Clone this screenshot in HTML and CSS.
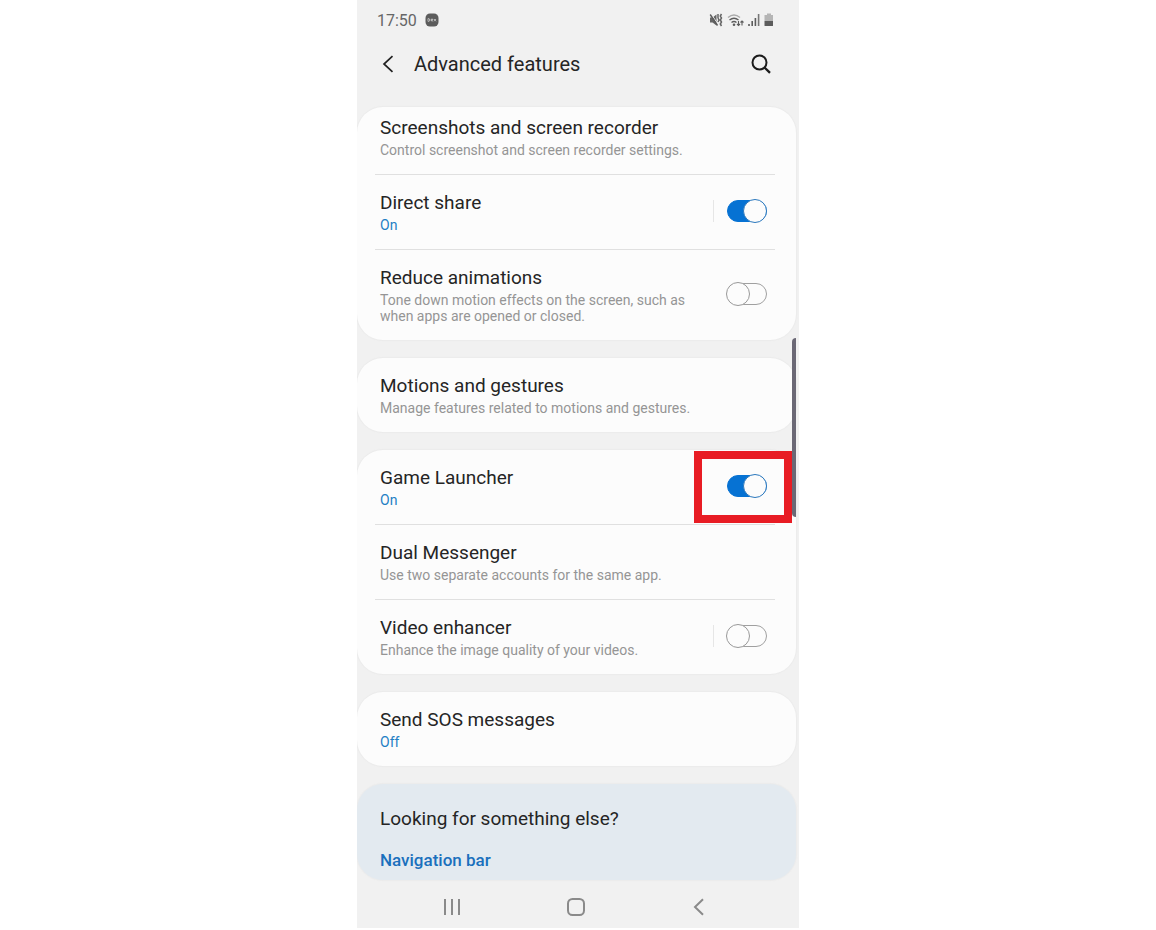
FILE: index.html
```html
<!DOCTYPE html>
<html lang="en">

<head>
  <meta charset="UTF-8">
  <meta name="viewport" content="width=device-width, initial-scale=1.0">
  <title>Advanced features</title>
  <link rel="stylesheet" href="styles.css">
</head>

<body>
  <div class="phone">
    <div class="status-bar">
      <span class="clock">17:50</span>
      <svg class="dex" width="14" height="14" viewBox="0 0 14 14">
        <rect x="0.5" y="0.5" width="13" height="13" rx="4.5" fill="#5c5c5c"/>
        <path d="M3 5.6v2.8h.8q1-.2 1-1.4t-1-1.4zM8 7H6q0-1 1-1t1 1M6 7q0 1.300 1.800 1M9 6l2 2.300M11 6L9 8.300" fill="none" stroke="#ddd" stroke-width="0.7"/>
      </svg>
      <div class="status-icons">
        <svg width="14" height="14" viewBox="0 0 14 14">
          <path d="M1 4.500h2.500L7.500 1.500v11L3.500 9.500H1z" fill="#666"/>
          <path d="M2.200 1l7 10.500" stroke="#f1f1f1" stroke-width="1"/>
          <path d="M1.200 1.500l7.300 11" stroke="#5c5c5c" stroke-width="1.400"/>
          <path d="M9 1v4M12.500 1l-1.200 2 1.200 2-1.200 2 1.200 2-1.200 2 1.200 2M9 5l1 2-1 2" fill="none" stroke="#666" stroke-width="1.500"/>
        </svg>
        <svg width="17" height="14" viewBox="0 0 17 14">
          <path d="M1 4.500q6-5 12 0" fill="none" stroke="#aaa" stroke-width="1.400"/>
          <path d="M2.500 7q4.500-3.600 9 0M4.500 9.500q2.500-2 5 0" fill="none" stroke="#5c5c5c" stroke-width="1.400"/>
          <circle cx="7" cy="11.800" r="1.300" fill="#5c5c5c"/>
          <path d="M11.500 8v4.500M10 11l1.500 1.500 1.500-1.500M15 12.500V8M13.500 9.500L15 8l1.500 1.500" fill="none" stroke="#5c5c5c" stroke-width="1.100"/>
        </svg>
        <svg width="12" height="14" viewBox="0 0 12 14">
          <path d="M1 13v-2M4.200 13V8M7.400 13V5" stroke="#5c5c5c" stroke-width="1.600"/>
          <path d="M10.600 13V1" stroke="#777" stroke-width="1.600"/>
        </svg>
        <svg width="10" height="14" viewBox="0 0 10 14">
          <path d="M3 0.500h4V2h2v6H0.500V2H3z" fill="#b5b5b5"/>
          <path d="M0.500 8H9v4.500q0 .5-.5.5H1q-.5 0-.5-.5z" fill="#5c5c5c"/>
        </svg>
      </div>
    </div>

    <header class="app-bar">
      <button class="icon-button" type="button" aria-label="Back">
        <svg width="12" height="18" viewBox="0 0 12 18">
          <path d="M10.500 1.200L2 9l8.500 7.800" fill="none" stroke="#222" stroke-width="1.700"/>
        </svg>
      </button>
      <h1>Advanced features</h1>
      <button class="icon-button search" type="button" aria-label="Search">
        <svg width="20" height="20" viewBox="0 0 20 20">
          <circle cx="8.500" cy="8.500" r="7" fill="none" stroke="#1c1c1c" stroke-width="2"/>
          <path d="M13.500 13.500l5.500 5.300" stroke="#1c1c1c" stroke-width="2.400"/>
        </svg>
      </button>
    </header>

    <main>
      <section class="card">
        <div class="row row-scrolled">
          <div class="text">
            <h2>Screenshots and screen recorder</h2>
            <p>Control screenshot and screen recorder settings.</p>
          </div>
        </div>
        <div class="row">
          <div class="text">
            <h2><label for="direct-share">Direct share</label></h2>
            <p class="state">On</p>
          </div>
          <div class="switch split">
            <input type="checkbox" id="direct-share" checked>
          </div>
        </div>
        <div class="row">
          <div class="text">
            <h2><label for="reduce-animations">Reduce animations</label></h2>
            <p>Tone down motion effects on the screen, such as when apps are opened or closed.</p>
          </div>
          <div class="switch">
            <input type="checkbox" id="reduce-animations">
          </div>
        </div>
      </section>

      <section class="card">
        <div class="row">
          <div class="text">
            <h2>Motions and gestures</h2>
            <p>Manage features related to motions and gestures.</p>
          </div>
        </div>
      </section>

      <section class="card">
        <div class="row">
          <div class="text">
            <h2><label for="game-launcher">Game Launcher</label></h2>
            <p class="state">On</p>
          </div>
          <div class="switch highlight">
            <input type="checkbox" id="game-launcher" checked>
          </div>
        </div>
        <div class="row">
          <div class="text">
            <h2>Dual Messenger</h2>
            <p>Use two separate accounts for the same app.</p>
          </div>
        </div>
        <div class="row">
          <div class="text">
            <h2><label for="video-enhancer">Video enhancer</label></h2>
            <p>Enhance the image quality of your videos.</p>
          </div>
          <div class="switch split">
            <input type="checkbox" id="video-enhancer">
          </div>
        </div>
      </section>

      <section class="card">
        <div class="row">
          <div class="text">
            <h2>Send SOS messages</h2>
            <p class="state">Off</p>
          </div>
        </div>
      </section>

      <section class="card suggestions">
        <h2>Looking for something else?</h2>
        <a href="#">Navigation bar</a>
      </section>

      <div class="scrollbar"></div>
    </main>

    <nav class="nav-bar">
      <button class="icon-button" type="button" aria-label="Recent apps">
        <svg width="18" height="18" viewBox="0 0 18 18">
          <path d="M2 1v16M9 1v16M16 1v16" stroke="#8a8a8a" stroke-width="2"/>
        </svg>
      </button>
      <button class="icon-button" type="button" aria-label="Home">
        <svg width="18" height="18" viewBox="0 0 18 18">
          <rect x="1" y="1" width="16" height="16" rx="4.500" fill="none" stroke="#8a8a8a" stroke-width="2"/>
        </svg>
      </button>
      <button class="icon-button" type="button" aria-label="Back">
        <svg width="18" height="18" viewBox="0 0 18 18">
          <path d="M13 1.200L5 9l8 7.800" fill="none" stroke="#8a8a8a" stroke-width="2"/>
        </svg>
      </button>
    </nav>
  </div>
</body>

</html>
```

FILE: styles.css
```css
*,
*::before,
*::after {
  box-sizing: border-box;
}

body {
  margin: 0;
  background-color: #fff;
  color: #252525;
  font-family: Roboto, sans-serif;
}

h1,
h2,
p {
  margin: 0;
  font-weight: normal;
}

svg {
  display: block;
}

.phone {
  max-width: 442px;
  margin: 0 auto;
  background-color: #f1f1f1;
}

.status-bar {
  display: flex;
  align-items: center;
  height: 40px;
  padding: 0 25px 0 20px;
  color: #666;
  font-size: 16px;
}

.dex {
  margin-left: 8px;
}

.status-icons {
  display: flex;
  gap: 4px;
  margin-left: auto;
}

.app-bar {
  display: flex;
  align-items: center;
  height: 48px;
  margin-bottom: 19px;
  padding: 0 28px 0 25px;
}

.app-bar h1 {
  margin-left: 20px;
  font-size: 20px;
  line-height: 24px;
}

.icon-button {
  padding: 0;
  border: none;
  background: none;
  cursor: pointer;
}

.search {
  margin-left: auto;
}

main {
  position: relative;
  display: flex;
  flex-direction: column;
  gap: 18px;
  padding-right: 3px;
}

.card {
  border-radius: 26px;
  background-color: #fcfcfc;
  box-shadow: 0 0 1px 1px #ebebeb;
  clip-path: inset(-2px -2px -2px 0);
}

.row {
  position: relative;
  display: flex;
  align-items: center;
  padding: 16px 28px 16px 23px;
}

.row-scrolled {
  padding-top: 9px;
}

.row + .row {
  margin-top: 1px;
}

/* divider */
.row + .row::before {
  content: "";
  position: absolute;
  top: -1px;
  left: 18px;
  right: 21px;
  height: 1px;
  background-color: #e0e0e0;
}

.text {
  flex: 1;
}

h2 {
  font-size: 19px;
  line-height: 24px;
}

.text p {
  margin-top: 2px;
  color: #959595;
  font-size: 14px;
  line-height: 16px;
}

.text .state {
  color: #1f7fc4;
}

.switch {
  position: relative;
  margin: 0 0 2px 12px;
  padding-left: 12px;
  border-left: 1px solid transparent;
}

.split {
  border-color: #e6e6e6;
}

.switch input {
  appearance: none;
  position: relative;
  display: block;
  width: 40px;
  height: 22px;
  margin: 0 1px;
  border: 1px solid #a0a0a0;
  border-radius: 11px;
  cursor: pointer;
}

/* knob */
.switch input::before {
  content: "";
  position: absolute;
  top: -2px;
  left: -2px;
  width: 24px;
  height: 24px;
  border: 1px solid #999;
  border-radius: 50%;
  background-color: #fcfcfc;
}

.switch input:checked {
  border-color: #0672d3;
  background-color: #0672d3;
}

.switch input:checked::before {
  left: auto;
  right: -1px;
  border-color: #2b78bd;
}

.highlight::after {
  content: "";
  position: absolute;
  top: -24px;
  right: -24px;
  z-index: 1;
  width: 98px;
  height: 72px;
  border: 8px solid #e81c24;
  pointer-events: none;
}

.suggestions {
  display: flex;
  flex-direction: column;
  align-items: flex-start;
  gap: 17px;
  padding: 23px 23px 8px;
  background-color: #e3eaf0;
}

.suggestions a {
  color: #1a70bd;
  font-size: 17px;
  font-weight: 500;
  line-height: 24px;
  text-decoration: none;
}

.scrollbar {
  position: absolute;
  top: 231px;
  right: 3px;
  width: 4px;
  height: 179px;
  border-radius: 4px 0 0 4px;
  background-color: #6b6875;
}

.nav-bar {
  display: flex;
  align-items: center;
  justify-content: space-between;
  height: 48px;
  padding: 6px 91px 0 86px;
}
```
